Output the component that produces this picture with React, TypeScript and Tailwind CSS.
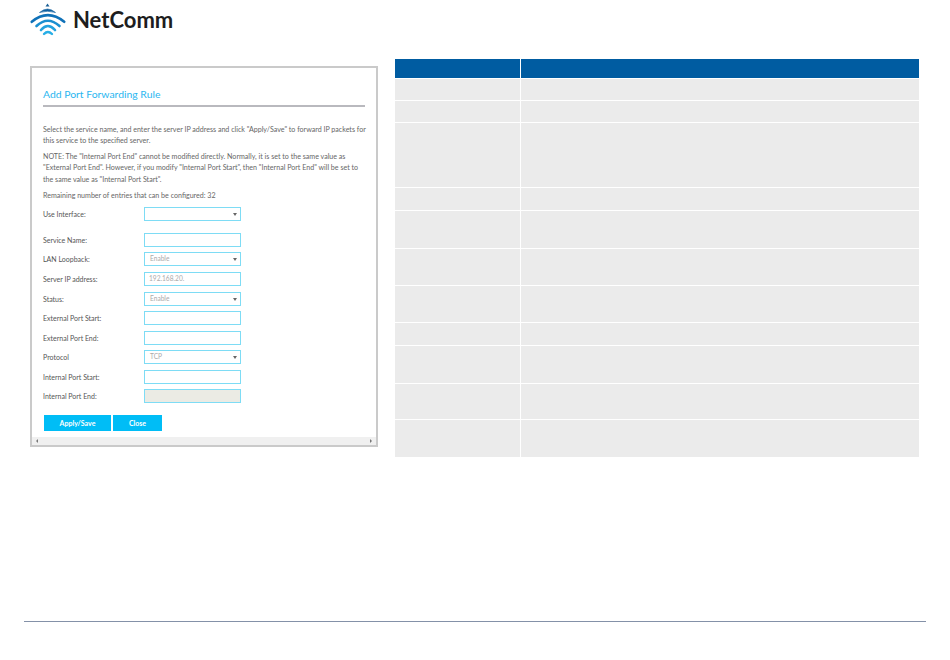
import React from 'react';

const rowHeights = [21, 21, 64, 22, 37, 36, 36, 22, 37, 35, 37];

const Logo = () => (
  <div className="flex items-center h-[33px] ml-[30px]">
    <svg width="36" height="33" viewBox="0 0 36 33" fill="none">
      <path d="M17.5 0.5 L19.5 3.5 L15.5 3.5 Z" fill="#1b5f95" />
      <path d="M9.5 9.5 Q17.5 2.5 25.5 9.5 Q17.5 7 9.5 9.5 Z" fill="#0f5f9f" stroke="#0f5f9f" strokeWidth="0.6" />
      <path d="M1.8 18.8 Q17.8 5.5 34.2 18.8" stroke="#0f71b8" strokeWidth="2.6" strokeLinecap="round" />
      <path d="M6.5 23 Q17.8 12.5 29.5 23" stroke="#1a8fd0" strokeWidth="2.6" strokeLinecap="round" />
      <path d="M11 27 Q17.8 19 25 27" stroke="#22a2de" strokeWidth="2.6" strokeLinecap="round" />
      <path d="M14 31 Q17.8 27 22 31" stroke="#27aee6" strokeWidth="2.4" strokeLinecap="round" />
    </svg>
    <span className="ml-[7px] font-['Lato',sans-serif] font-bold text-[22px] leading-none text-[#1d1d20]">NetComm</span>
  </div>
);

const Label = ({ children }: { children: React.ReactNode }) => (
  <div className="w-[101px] shrink-0 text-[#555] text-[7px] leading-none">{children}</div>
);

const Field = ({ label, value, select, disabled, className }: { label: string; value?: string; select?: boolean; disabled?: boolean; className?: string }) => (
  <div className={`flex items-center h-[14px] ${className ?? ''}`}>
    <Label>{label}</Label>
    <div className={`w-[97px] h-[14px] border border-[#7edcf5] flex items-center justify-between pr-[3px] text-[6.6px] text-[#aaa] ${select ? 'pl-[5px]' : 'pl-[4px]'} ${disabled ? 'bg-[#ebebe4]' : 'bg-white'}`}>
      <span>{value}</span>
      {select && <span className="w-0 h-0 border-x-[2px] border-x-transparent border-t-[3px] border-t-[#666]" />}
    </div>
  </div>
);

export default function App() {
  return (
    <div className="w-[950px] h-[660px] bg-white flex flex-col font-['Lato',sans-serif] overflow-hidden">
      <div className="pt-[3px]">
        <Logo />
      </div>
      <div className="flex items-start mt-[23px] pl-[30px]">
        {/* form screenshot */}
        <div className="mt-[7px] w-[348px] h-[381px] border-2 border-[#cacaca] flex flex-col justify-between">
          <div className="pl-[11px] pr-[11px] pt-[20px]">
            <h1 className="text-[#29b6f0] text-[10.4px] leading-[13px] font-normal">Add Port Forwarding Rule</h1>
            <div className="h-[1.5px] bg-[#b9b9be] mt-[4px]" />
            <p className="mt-[17px] text-[#666] text-[7.1px] leading-[11px] whitespace-nowrap">
              Select the service name, and enter the server IP address and click "Apply/Save" to forward IP packets for<br />
              this service to the specified server.
            </p>
            <p className="mt-[5px] text-[#666] text-[7.1px] leading-[11.5px]">
              NOTE: The "Internal Port End" cannot be modified directly. Normally, it is set to the same value as "External Port End". However, if you modify "Internal Port Start", then "Internal Port End" will be set to the same value as "Internal Port Start".
            </p>
            <p className="mt-[5px] text-[#666] text-[7.1px] leading-[11px]">Remaining number of entries that can be configured: 32</p>
            <div className="mt-[6px]">
              <Field label="Use Interface:" select />
              <Field label="Service Name:" className="mt-[12px]" />
              <Field label="LAN Loopback:" value="Enable" select className="mt-[5px]" />
              <Field label="Server IP address:" value="192.168.20." className="mt-[6px]" />
              <Field label="Status:" value="Enable" select className="mt-[6px]" />
              <Field label="External Port Start:" className="mt-[5px]" />
              <Field label="External Port End:" className="mt-[6px]" />
              <Field label="Protocol" value="TCP" select className="mt-[5px]" />
              <Field label="Internal Port Start:" className="mt-[6px]" />
              <Field label="Internal Port End:" disabled className="mt-[5px]" />
            </div>
            <div className="flex gap-[2px] mt-[12px] ml-[1px]">
              <button className="w-[67px] h-[16px] bg-[#00bdf6] text-white text-[7px] font-bold">Apply/Save</button>
              <button className="w-[49px] h-[16px] bg-[#00bdf6] text-white text-[7px] font-bold">Close</button>
            </div>
          </div>
          <div className="h-[8px] bg-[#f0f0f0] flex items-center justify-between px-[4px]">
            <span className="w-0 h-0 border-y-[2px] border-y-transparent border-r-[2px] border-r-[#777]" />
            <span className="w-0 h-0 border-y-[2px] border-y-transparent border-l-[2px] border-l-[#777]" />
          </div>
        </div>
        {/* table */}
        <div className="ml-[17px] w-[524px] flex flex-col gap-px">
          <div className="flex gap-px h-[19px]">
            <div className="w-[125px] bg-[#005ca1]" />
            <div className="flex-1 bg-[#005ca1]" />
          </div>
          {rowHeights.map((h, i) => (
            <div key={i} className="flex gap-px" style={{ height: h }}>
              <div className="w-[125px] bg-[#ebebeb]" />
              <div className="flex-1 bg-[#ebebeb]" />
            </div>
          ))}
        </div>
      </div>
      <div className="mt-auto mb-[38px] mx-[24px] h-px bg-[#8491a8]" />
    </div>
  );
}
